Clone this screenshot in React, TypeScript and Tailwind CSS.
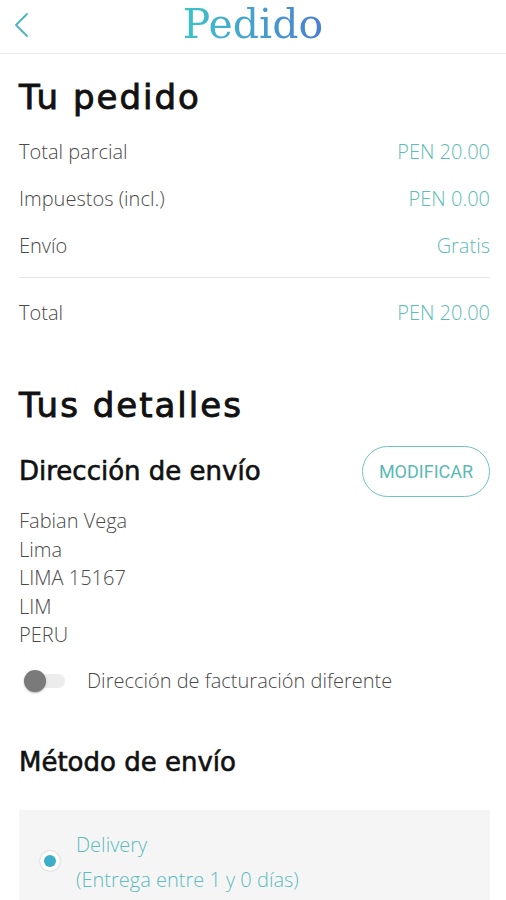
import React from "react";

const body = { fontFamily: '"Open Sans", "Noto Sans", sans-serif' };
const head = { fontFamily: '"DejaVu Sans", "Noto Sans", sans-serif' };

function Row({ label, value }: { label: string; value: string }) {
  return (
    <div className="flex h-[47px] items-center justify-between text-[20px] font-light">
      <span className="text-[#4a4a4a]">{label}</span>
      <span className="text-[#5cbcb6]">{value}</span>
    </div>
  );
}

export default function App() {
  return (
    <div className="w-[506px] h-[900px] overflow-hidden bg-white" style={body}>
      <header className="relative flex h-[54px] items-center justify-center border-b border-[#ececec]">
        <svg className="absolute left-[12px] top-[12px]" width="20" height="26" viewBox="0 0 20 26" fill="none">
          <path d="M15 2 L4 13 L15 24" stroke="#4bb4c0" strokeWidth="1.8" strokeLinecap="round" strokeLinejoin="round" />
        </svg>
        <h1
          className="bg-gradient-to-r from-[#3cc3c6] to-[#4a7ed2] bg-clip-text text-[41px] leading-none text-transparent pb-[4px]"
          style={{ fontFamily: '"DejaVu Serif", "Liberation Serif", serif' }}
        >
          Pedido
        </h1>
      </header>

      <div className="px-[19px] pr-[16px]">
        <h2
          className="mt-[24px] text-[34px] leading-[38px] tracking-[2px] text-[#111] [-webkit-text-stroke:0.9px_#111]"
          style={head}
        >
          Tu pedido
        </h2>
        <div className="mt-[12px]">
          <Row label="Total parcial" value="PEN 20.00" />
          <Row label="Impuestos (incl.)" value="PEN 0.00" />
          <Row label="Envío" value="Gratis" />
        </div>
        <div className="mt-[8px] border-t border-[#e8e8e8]" />
        <div className="mt-[11px]">
          <Row label="Total" value="PEN 20.00" />
        </div>

        <h2
          className="mt-[50px] text-[34px] leading-[38px] tracking-[2px] text-[#111] [-webkit-text-stroke:0.9px_#111]"
          style={head}
        >
          Tus detalles
        </h2>

        <div className="mt-[22px] flex items-center justify-between">
          <h3 className="text-[26px] text-[#111] [-webkit-text-stroke:0.6px_#111]" style={head}>
            Dirección de envío
          </h3>
          <button
            className="h-[51px] w-[128px] rounded-full border-[1.5px] border-[#6cc4c0] text-[18px] text-[#5bb9b6]"
            style={{ fontFamily: 'Roboto, "Noto Sans", sans-serif' }}
          >
            MODIFICAR
          </button>
        </div>

        <div className="mt-[10px] text-[20px] font-light leading-[28.5px] text-[#4a4a4a]">
          <div>Fabian Vega</div>
          <div>Lima</div>
          <div>LIMA 15167</div>
          <div>LIM</div>
          <div>PERU</div>
        </div>

        <div className="mt-[16px] flex items-center gap-[22px]">
          <div className="relative h-[22px] w-[46px]">
            <div className="absolute left-[6px] top-[4px] h-[14px] w-[40px] rounded-full bg-[#ececec]" />
            <div className="absolute left-[5px] top-0 h-[22px] w-[22px] rounded-full bg-[#7a7a7a] shadow-[0_1px_2px_rgba(0,0,0,0.3)]" />
          </div>
          <span className="text-[20px] font-light text-[#4a4a4a]">Dirección de facturación diferente</span>
        </div>

        <h3 className="mt-[47px] text-[26px] text-[#111] [-webkit-text-stroke:0.6px_#111]" style={head}>
          Método de envío
        </h3>

        <div className="mt-[28px] flex h-[120px] items-start gap-[16px] bg-[#f5f5f5] pl-[21px] pt-[17px]">
          <div className="mt-[24px] flex h-[20px] w-[20px] items-center justify-center rounded-full bg-white shadow-[0_0_2px_rgba(0,0,0,0.25)]">
            <div className="h-[12px] w-[12px] rounded-full bg-[#3caec8]" />
          </div>
          <div className="text-[20px] font-light leading-[35px] text-[#5cbcbe]">
            <div>Delivery</div>
            <div>(Entrega entre 1 y 0 días)</div>
          </div>
        </div>
      </div>
    </div>
  );
}
